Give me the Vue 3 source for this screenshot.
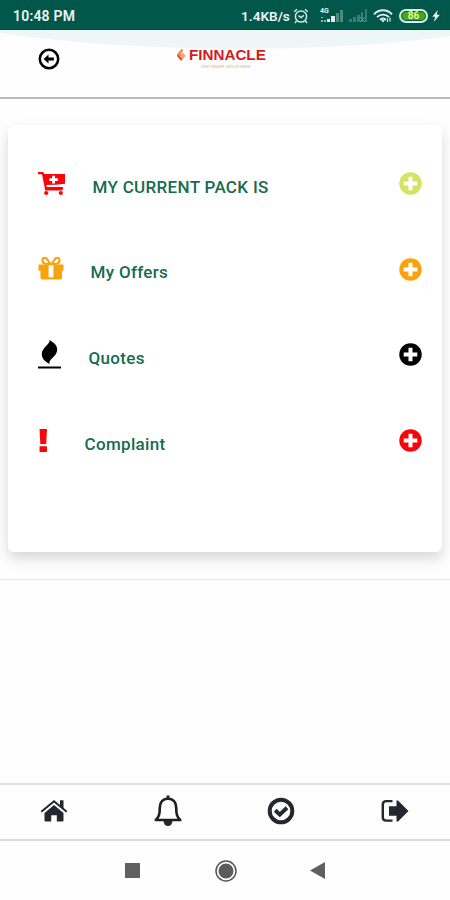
<script setup>
const menuItems = [
  { id: 'pack', label: 'MY CURRENT PACK IS', color: '#d3e362' },
  { id: 'offers', label: 'My Offers', color: '#f8a30c' },
  { id: 'quotes', label: 'Quotes', color: '#000000' },
  { id: 'complaint', label: 'Complaint', color: '#f80509' }
]
</script>

<template>
  <div class="screen">
    <div class="status-bar">
      <span class="time">10:48 PM</span>
      <span class="speed">1.4KB/s</span>
      <svg class="alarm" viewBox="0 0 16 16" fill="none" stroke="#d5e6e2" stroke-width="1.5">
        <circle cx="8" cy="8.5" r="5.6" />
        <path d="M1.2 3.8 4 1.3M14.8 3.8 12 1.3M3.5 13 2 15M12.5 13l1.5 2M5.4 7.6 8 9.5l2.8-2.2" />
      </svg>
      <svg class="signal-main" viewBox="0 0 24 16">
        <text x="0" y="5" class="network">4G</text>
        <path d="M1 9h2v1H1zM1 12h2v2H1zM4 12h2v2H4z" fill="#8fb7ae" />
        <path d="M7 11h3v3H7zM11 8h4v6h-4z" fill="#e4efed" />
        <path d="M16 5h3v9h-3zM20 2h3v12h-3z" fill="#4e8b7f" />
      </svg>
      <svg class="signal-off" viewBox="0 0 18 14" fill="#3b7e71">
        <path d="M0 10h3v3H0zM4 8h3v5H4zM8 6h3v7H8zM12 3h2v10h-2zM16 0h2v13h-2z" />
        <path d="m11 8 5 5M16 8l-5 5" stroke="#6b9e94" />
      </svg>
      <svg class="wifi" viewBox="0 0 20 14" fill="none" stroke="#e4efed" stroke-width="1.9">
        <path d="M1 5.3C6-.1 14-.1 19 5.3M4 8.2c3.5-3.5 8.5-3.5 12 0M7 10.8c2-1.8 4-1.8 6 0" />
        <path d="m8 11 2 2.5 2-2.500z" fill="#e4efed" stroke="none" />
        <path d="M14.5 13V9.500M17 8.500v4" stroke-width="1.2" />
      </svg>
      <span class="battery"><span class="charge">86</span></span>
      <svg class="bolt" viewBox="0 0 8 12">
        <path d="M5.8 0 .3 6.8h3L1.8 12 7.8 4.7H4.6z" fill="#f0f7f5" />
      </svg>
    </div>

    <header class="header">
      <svg class="curve" viewBox="0 0 450 20" preserveAspectRatio="none">
        <path d="M0 3V0h450v6C330 23 145 24 0 3z" fill="#eff7f6" />
      </svg>
      <svg class="back" viewBox="0 0 22 22">
        <circle cx="11" cy="11" r="9.2" fill="none" stroke="#000" stroke-width="2.5" />
        <path d="m5.6 11 4.9-4.6v3.2h5.4v2.8h-5.4v3.2z" />
      </svg>
      <div class="logo">
        <svg class="logo-mark" viewBox="0 0 10 14">
          <path d="M5 0 .5 5.7l3.2 3.5 2-2L4 5.4 7.2 2z" fill="#ef8c52" />
          <path d="m6 4 3.5 3.8L5 13.5 2.5 11 6 7.4 4.5 6z" fill="#f2a36b" />
          <path d="m.5 5.7 5 6.1-1 1.6L.2 8z" fill="#db3027" />
        </svg>
        <div class="logo-words">
          <span class="logo-name">FINNACLE</span>
          <span class="logo-tag">SOFTWARE SOLUTIONS</span>
        </div>
      </div>
    </header>

    <main class="content">
      <section class="card">
        <div v-for="item in menuItems" :key="item.id" class="menu-row">
          <div class="row-icon" :class="item.id">
            <svg v-if="item.id === 'pack'" width="27" height="24" viewBox="0 0 27 24">
              <path d="M0 0h5.2l1 2H27v9.700q-9 1.300-18.700 1.300l.4 2H25v2.200H7L4 2.200H0z" fill="#f80509" />
              <path d="M7 17h17.500v1.500H7z" fill="#f80509" />
              <circle cx="8.200" cy="21" r="2.100" fill="#f80509" />
              <circle cx="22.800" cy="21" r="2.100" fill="#f80509" />
              <path d="M14.200 3.800h2.800v2.500h2.800v2.800H17v2.500h-2.800V9.100h-2.800V6.300h2.800z" fill="#fff" />
            </svg>
            <svg v-else-if="item.id === 'offers'" width="26" height="24" viewBox="0 0 26 24">
              <path d="M.5 7.5h25v6.200H.5zM2.500 13h21.500v7.500q0 2-2 2H4.500q-2 0-2-2z" fill="#f8a30c" />
              <path d="M12.500 7.400 10 3.500C8-.2 4.500-.2 4.500 3.800c0 2.500 2 3.600 8 3.600zM13.500 7.400 16 3.500c2-3.700 5.500-3.700 5.500.3 0 2.500-2 3.600-8 3.600z" fill="none" stroke="#f8a30c" stroke-width="2.200" />
              <path d="M10.600 8.300h4.800v12h-4.800z" fill="#fff" />
            </svg>
            <svg v-else-if="item.id === 'quotes'" width="23" height="30" viewBox="0 0 23 30">
              <path d="M11.500 0c1.100 4-7.700 7.500-7.700 14.200 0 5 4 7.500 7.800 9.800-1.800-4.800 7.600-7.500 7.600-14.300C19.200 5.200 15.800 2.400 11.500 0z" />
              <path d="M0 26.500h23v2H0z" />
            </svg>
            <svg v-else width="10" height="24" viewBox="0 0 10 24" fill="#f80509">
              <path d="M1.500 0H9l-.8 15H2.300zM2.300 17.300h5.900q.8 0 .8.800v4.100q0 .8-.8.800H2.300q-.8 0-.8-.8v-4.100q0-.8.8-.8z" />
            </svg>
          </div>
          <span class="label">{{ item.label }}</span>
          <svg class="plus" viewBox="0 0 24 24">
            <circle cx="12" cy="12" r="11.7" :fill="item.color" />
            <path d="M12 7v10M7 12h10" stroke="#fff" stroke-width="4.2" stroke-linecap="square" />
          </svg>
        </div>
      </section>
    </main>

    <nav class="tabs">
      <svg width="28" height="24" viewBox="0 0 28 24" fill="#26272e">
        <path d="m14 6 9.500 8v7.500q0 1-1 1h-5.700v-6.200h-5.600v6.200H5.500q-1 0-1-1V14z" />
        <path d="M1.300 12.700 14 2.200l12.700 10.500" fill="none" stroke="#26272e" stroke-width="2" />
        <path d="M20 1.300h3.500V10L20 7z" />
      </svg>
      <svg width="28" height="32" viewBox="0 0 28 32">
        <path d="M1.800 25c3.200-3.200 4-5.500 4-12.500C5.800 6.500 9 4 14 3.500c5 .5 8.200 3 8.200 9 0 7 .8 9.300 4 12.500z" fill="none" stroke="#1d1d24" stroke-width="2.600" stroke-linejoin="round" />
        <path d="M12.500.5h3v3h-3zM9.500 26h9q-.5 5-4.500 5t-4.500-5z" fill="#26272e" />
      </svg>
      <svg width="28" height="28" viewBox="0 0 28 28" fill="none" stroke="#26272e">
        <circle cx="14" cy="14" r="11.300" stroke-width="4" />
        <path d="m8.200 13.300 4.600 4.300 7.200-6.800" stroke-width="4" />
      </svg>
      <svg width="28" height="24" viewBox="0 0 28 24" fill="#26272e">
        <path d="M11.500 2.100H5.300Q1.800 2.100 1.800 5.500v12.700q0 3.400 3.500 3.400h6.200" fill="none" stroke="#26272e" stroke-width="2.400" />
        <path d="M8 7.300h7.500V1.500H17L27.500 12 17 22.500h-1.500v-5.800H8z" />
      </svg>
    </nav>

    <div class="system-nav">
      <span class="recents"></span>
      <svg class="home" viewBox="0 0 22 22">
        <circle cx="11" cy="11" r="10" fill="none" stroke="#555" stroke-width="1.500" />
        <circle cx="11" cy="11" r="7.500" fill="#5c5c5c" />
      </svg>
      <svg class="system-back" viewBox="0 0 15 17">
        <path d="M15 0v17L0 8.500z" fill="#606060" />
      </svg>
    </div>
  </div>
</template>

<style>
body {
  background: #fefefe;
}
</style>

<style scoped>
.screen {
  display: flex;
  flex-direction: column;
  height: 900px;
  overflow: hidden;
  background: #fefefe;
  font-family: Roboto, "Liberation Sans", sans-serif;
}

svg {
  display: block;
  flex: none;
}

.status-bar {
  display: flex;
  align-items: center;
  box-sizing: border-box;
  height: 30px;
  padding: 2px 9px 0 13px;
  background: #00574a;
  border-bottom: 1px solid #064338;
  color: #edf5f3;
  font-size: 14px;
  font-weight: 600;
}

.time {
  width: 228px;
  letter-spacing: 0.2px;
}

.speed {
  width: 52px;
  font-size: 13.6px;
}

.alarm {
  width: 16px;
  height: 16px;
}

.signal-main {
  width: 24px;
  height: 16px;
  margin-left: 11px;
}

.network {
  font-size: 7px;
  font-weight: 700;
  fill: #e4efed;
}

.signal-off {
  width: 18px;
  height: 14px;
  margin-left: 5px;
}

.wifi {
  width: 20px;
  height: 14px;
  margin-left: 6px;
}

.battery {
  flex: none;
  box-sizing: border-box;
  width: 29px;
  height: 14px;
  margin-left: 6px;
  padding: 1px;
  border: 2px solid #dcebe7;
  border-radius: 7px;
}

.charge {
  display: block;
  height: 8px;
  border-radius: 4px;
  background: #43a91b;
  color: #e8ff9c;
  font-size: 10px;
  line-height: 8px;
  text-align: center;
}

.bolt {
  width: 8px;
  height: 12px;
  margin-left: 4px;
}

.header {
  position: relative;
  display: flex;
  align-items: flex-start;
  box-sizing: border-box;
  height: 69px;
  border-bottom: 2px solid #b9b9b9;
}

.curve {
  position: absolute;
  top: 0;
  left: 0;
  width: 100%;
  height: 20px;
}

.back {
  position: relative;
  width: 22px;
  height: 22px;
  margin: 17.5px 0 0 38px;
}

.logo {
  position: relative;
  display: flex;
  margin: 17px 0 0 117px;
}

.logo-mark {
  width: 9px;
  height: 14px;
  margin-top: 1px;
}

.logo-words {
  display: flex;
  flex-direction: column;
  align-items: center;
  margin-left: 3px;
}

.logo-name {
  color: #d7191f;
  font-family: "Liberation Sans", sans-serif;
  font-size: 15.2px;
  font-weight: 700;
  line-height: 16px;
}

.logo-tag {
  margin-top: 1px;
  margin-right: 3px;
  color: #dfbc90;
  font-size: 4.2px;
  font-weight: 500;
  letter-spacing: 0.25px;
  line-height: 5px;
}

.content {
  box-sizing: border-box;
  height: 481px;
  padding: 26px 8px 0;
  border-bottom: 1px solid #e4e4e4;
}

.card {
  box-sizing: border-box;
  height: 427px;
  padding: 16px 20px 0 30px;
  border-radius: 6px;
  background: #fff;
  box-shadow: 0 6px 12px rgba(0, 0, 0, 0.09), 0 7px 18px rgba(0, 0, 0, 0.07);
}

.menu-row {
  display: flex;
  align-items: center;
  height: 85.6px;
}

.row-icon {
  flex: none;
}

.pack {
  width: 54.5px;
}

.offers {
  width: 52.5px;
}

.quotes {
  width: 50.5px;
}

.complaint {
  width: 46.5px;
}

.label {
  flex: 1;
  padding-top: 6px;
  color: #176c50;
  font-size: 17px;
  font-weight: 500;
  letter-spacing: 0.32px;
  white-space: nowrap;
}

.plus {
  width: 23px;
  height: 23px;
}

.tabs {
  display: flex;
  align-items: center;
  justify-content: space-between;
  box-sizing: border-box;
  height: 58px;
  margin-top: auto;
  padding: 0 41px 3px 40px;
  border-top: 2px solid #e0e0e0;
  border-bottom: 2px solid #d9d9d9;
}

.system-nav {
  display: flex;
  align-items: center;
  justify-content: center;
  height: 59px;
  padding-right: 1px;
}

.recents {
  width: 15px;
  height: 15px;
  background: #606060;
}

.home {
  width: 22px;
  height: 22px;
  margin: 0 73px 0 75px;
}

.system-back {
  width: 15px;
  height: 17px;
}
</style>
